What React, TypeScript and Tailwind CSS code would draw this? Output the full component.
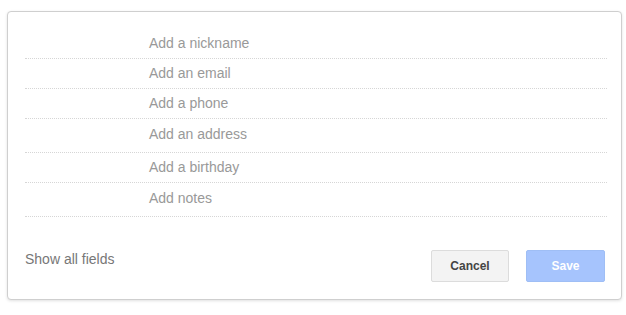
import React from "react";

const rows: { label: string; h: string }[] = [
  { label: "Add a nickname", h: "h-[30px]" },
  { label: "Add an email", h: "h-[30px]" },
  { label: "Add a phone", h: "h-[30px]" },
  { label: "Add an address", h: "h-[34px] pb-[2px]" },
  { label: "Add a birthday", h: "h-[30px]" },
  { label: "Add notes", h: "h-[34px] pb-[2px]" },
];

export default function App() {
  return (
    <div className="w-[626px] h-[315px] bg-white pt-[11px] pl-[7px] font-['Liberation_Sans',Arial,sans-serif]">
      <div className="w-[615px] h-[289px] box-border border border-[#cfcfcf] rounded-[4px] bg-white shadow-[0_1px_3px_rgba(0,0,0,0.12)] pl-[17px] pt-[17px]">
        <div className="w-[582px]">
          {rows.map((r) => (
            <div
              key={r.label}
              className={`${r.h} box-border border-b border-dotted border-[#d6d6d6] flex items-center pl-[124px] text-[14px] text-[#999999]`}
            >
              {r.label}
            </div>
          ))}
        </div>
        <div className="w-[580px] flex justify-between items-start mt-[33px]">
          <div className="mt-[1px] leading-[16px] text-[14px] text-[#777777]">Show all fields</div>
          <div className="flex gap-[17px]">
            <button className="w-[78px] h-[32px] box-border border border-[#dcdcdc] rounded-[2px] bg-[#f3f3f3] text-[12px] font-bold text-[#444444]">
              Cancel
            </button>
            <button className="w-[79px] h-[32px] box-border border border-[#9fbef5] rounded-[2px] bg-[#a6c4fd] text-[12px] font-bold text-white">
              Save
            </button>
          </div>
        </div>
      </div>
    </div>
  );
}
